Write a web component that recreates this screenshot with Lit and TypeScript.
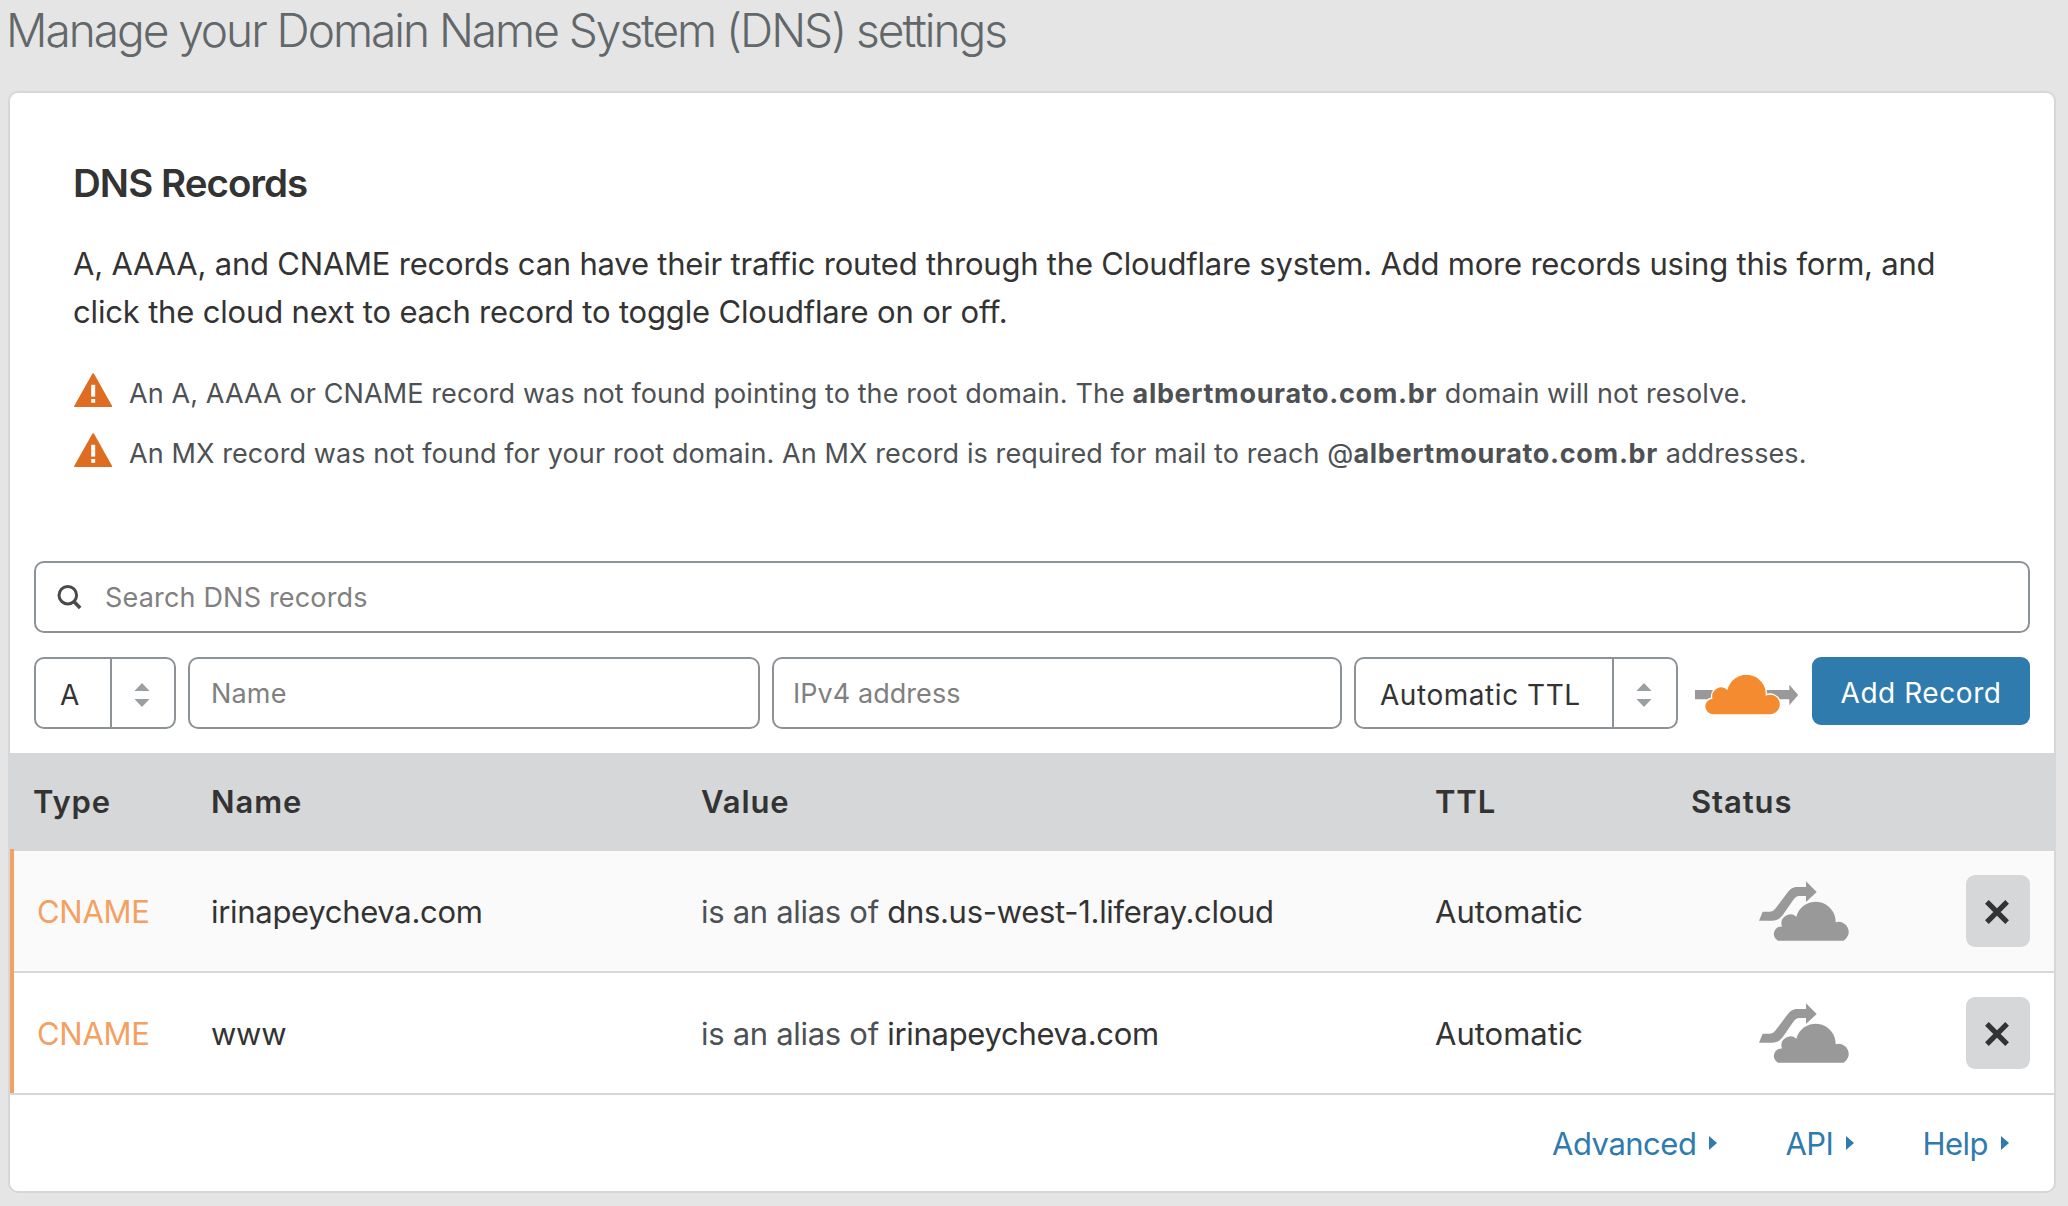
import { LitElement, html, css } from "lit";
import { customElement } from "lit/decorators.js";

interface DnsRecord {
  type: string;
  name: string;
  target: string;
  ttl: string;
}

const records: DnsRecord[] = [
  { type: "CNAME", name: "irinapeycheva.com", target: "dns.us-west-1.liferay.cloud", ttl: "Automatic" },
  { type: "CNAME", name: "www", target: "irinapeycheva.com", ttl: "Automatic" },
];

const links = ["Advanced", "API", "Help"];

const warningIcon = html`<svg class="warning-icon" viewBox="0 0 38.4 34.4" width="38.4" height="34.4">
  <path d="M18.5 .6Q19.2 -.3 19.9 .6L38.2 33Q38.5 34.3 37.4 34.4H1Q-.1 34.3 .2 33Z" fill="#de6c21" />
  <rect x="17.2" y="11.8" width="4" height="11.8" fill="#fff" />
  <rect x="17.2" y="26" width="4" height="3.8" fill="#fff" />
</svg>`;

const searchIcon = html`<svg class="search-icon" viewBox="0 0 26 26" width="26" height="26">
  <circle cx="10.8" cy="11.2" r="8.8" fill="none" stroke="#4a4a4a" stroke-width="3" />
  <path d="M16.6 17.2L23.2 24" stroke="#4a4a4a" stroke-width="3.6" />
</svg>`;

const steppers = html`<svg viewBox="0 0 16 24" width="16" height="24">
  <path d="M8 0L15.6 8H.4ZM8 24L15.6 16H.4Z" fill="#9a9fa1" />
</svg>`;

const proxiedCloud = "M98 177.5A23.3 23.3 0 0 1 97.5 131A27 27 0 0 1 142.5 105A58 58 0 0 1 257 122A29.3 29.3 0 1 1 269 177.5Z";

const proxiedIcon = html`<svg viewBox="45 60 310 120" width="103.3" height="40">
  <path d="M45 105H328V89L355 120L328 151V133H45Z" fill="#999" />
  <path d=${proxiedCloud} fill="#fff" stroke="#fff" stroke-width="8" />
  <path d=${proxiedCloud} fill="#f48b30" />
</svg>`;

const bypassIcon = html`<svg viewBox="57 34 270 180" width="90" height="60">
  <path
    fill="#999"
    d="M57 153L68 126H90C98 126 102 122 107 116L142 69C152 56 160 52 173 52H198V35L230 67L198 97V79H178C169 79 165 84 159 92L130 134C119 149 110 153 96 153ZM114 213A22.5 22.5 0 0 1 126 170.5A27 27 0 0 1 169 141A60 60 0 0 1 287 158A30.2 30.2 0 0 1 311 213Z"
  />
</svg>`;

const crossIcon = html`<svg viewBox="0 0 24 24" width="24" height="24">
  <path d="M1.9 1.9L22.1 22.1M22.1 1.9L1.9 22.1" stroke="#333" stroke-width="5.2" />
</svg>`;

const linkArrow = html`<svg viewBox="0 0 8 14" width="8" height="14"><path d="M0 0L8 7L0 14Z" fill="#2f7bae" /></svg>`;

@customElement("app-root")
export class AppRoot extends LitElement {
  static styles = css`
    :host {
      display: block;
      box-sizing: border-box;
      min-height: 1206px;
      padding: 0 12px 13px 8px;
      background: #e5e5e5;
      color: #333;
      font-family: Inter, "Liberation Sans", sans-serif;
      font-size: 31px;
    }
    * { box-sizing: border-box; }
    svg { display: block; flex: none; }
    .title {
      margin: 0 0 31px -2px;
      font-size: 46px;
      line-height: 60px;
      font-weight: 300;
      letter-spacing: -2.02px;
      color: #62676a;
      white-space: nowrap;
    }
    .card {
      height: 1102px;
      border: 2px solid #d5d7d8;
      border-radius: 10px;
      background: #fff;
      overflow: hidden;
    }
    .intro { padding: 66px 63px 0; }
    .intro h2 {
      margin: 0 0 33px;
      font-size: 38.5px;
      line-height: 48px;
      font-weight: 600;
      letter-spacing: -0.95px;
    }
    .intro p {
      margin: 0 0 27px;
      line-height: 48px;
      letter-spacing: -0.21px;
      white-space: nowrap;
    }
    .intro p .second { letter-spacing: -0.17px; }
    .warning {
      display: flex;
      align-items: center;
      height: 60px;
      padding-left: 1px;
      font-size: 27px;
      letter-spacing: 0.1px;
      color: #4d5154;
      white-space: nowrap;
    }
    .warning-icon { margin: -6px 16.6px 0 0; }
    .warning b { font-weight: 700; letter-spacing: 0.67px; }
    .form { padding: 78px 24px 24px; }
    .field {
      display: flex;
      align-items: center;
      height: 72px;
      padding-left: 21px;
      border: 2px solid #8d9296;
      border-radius: 10px;
      font-size: 27px;
      letter-spacing: 0.18px;
      color: #808080;
    }
    .field.address { padding-left: 19px; letter-spacing: 0.05px; }
    .search { margin-bottom: 24px; }
    .search-icon { margin: 0 22px 0 0; }
    .entry {
      display: grid;
      grid-template-columns: 142px 572px 570px 324px 1fr 218px;
      column-gap: 12px;
    }
    .select {
      display: grid;
      grid-template-columns: 1fr 64px;
      height: 72px;
      border: 2px solid #8d9296;
      border-radius: 10px;
      font-size: 28px;
      letter-spacing: 0.55px;
    }
    .select .value { padding: 4px 0 0 24px; line-height: 64px; white-space: nowrap; }
    .select .steps {
      display: flex;
      align-items: center;
      padding: 3px 0 0 22px;
      border-left: 2px solid #8d9296;
    }
    .toggle { display: flex; padding: 18px 0 0 5px; width: 110px; }
    .add {
      height: 68px;
      border-radius: 9px;
      background: #2f7bae;
      color: #fff;
      font-size: 28px;
      line-height: 72px;
      letter-spacing: 0.55px;
      text-align: center;
    }
    .head,
    .row {
      display: grid;
      align-items: center;
      white-space: nowrap;
    }
    .head {
      grid-template-columns: 178px 490px 734px 256px 1fr;
      height: 96px;
      padding-left: 23px;
      background: #d5d7d8;
      font-weight: 600;
      letter-spacing: 0.9px;
    }
    .body { border-left: 4px solid #f4a062; }
    .row {
      grid-template-columns: 173px 490px 734px 254px 277px 64px;
      height: 120px;
      padding-left: 24px;
      letter-spacing: -0.3px;
    }
    .row:first-child {
      height: 124px;
      border: solid #d5d7d8;
      border-width: 2px 0;
      background: #fafafa;
    }
    .type { color: #f4a062; letter-spacing: -0.3px; margin-left: -1px; }
    .alias { color: #4d5154; }
    .ttl { letter-spacing: 0; }
    .status { padding-left: 70px; }
    .remove {
      display: grid;
      place-items: center;
      width: 64px;
      height: 72px;
      padding: 2px 2px 0 0;
      border-radius: 9px;
      background: #d5d7d8;
    }
    .links {
      display: flex;
      justify-content: flex-end;
      align-items: center;
      gap: 68px;
      height: 98px;
      padding-right: 45px;
      border-top: 2px solid #d5d7d8;
      color: #2f7bae;
      letter-spacing: -0.5px;
    }
    .link { display: flex; align-items: center; gap: 13px; }
  `;

  private renderRecord(r: DnsRecord) {
    return html`<div class="row">
      <div class="type">${r.type}</div>
      <div>${r.name}</div>
      <div><span class="alias">is an alias of</span> ${r.target}</div>
      <div class="ttl">${r.ttl}</div>
      <div class="status">${bypassIcon}</div>
      <div class="remove">${crossIcon}</div>
    </div>`;
  }

  render() {
    return html`
      <div class="title">Manage your Domain Name System (DNS) settings</div>
      <section class="card">
        <div class="intro">
          <h2>DNS Records</h2>
          <p>A, AAAA, and CNAME records can have their traffic routed through the Cloudflare system. Add more records using this form, and<br /><span class="second">click the cloud next to each record to toggle Cloudflare on or off.</span></p>
          <div class="warning">
            ${warningIcon}<span>An A, AAAA or CNAME record was not found pointing to the root domain. The <b>albertmourato.com.br</b> domain will not resolve.</span>
          </div>
          <div class="warning">
            ${warningIcon}<span>An MX record was not found for your root domain. An MX record is required for mail to reach @<b>albertmourato.com.br</b> addresses.</span>
          </div>
        </div>
        <div class="form">
          <div class="field search">${searchIcon}<span>Search DNS records</span></div>
          <div class="entry">
            <div class="select"><span class="value">A</span><span class="steps">${steppers}</span></div>
            <div class="field">Name</div>
            <div class="field address">IPv4 address</div>
            <div class="select"><span class="value">Automatic TTL</span><span class="steps">${steppers}</span></div>
            <div class="toggle">${proxiedIcon}</div>
            <div class="add">Add Record</div>
          </div>
        </div>
        <div class="head">
          <div>Type</div><div>Name</div><div>Value</div><div>TTL</div><div>Status</div>
        </div>
        <div class="body">${records.map((r) => this.renderRecord(r))}</div>
        <div class="links">
          ${links.map((l) => html`<div class="link"><span>${l}</span>${linkArrow}</div>`)}
        </div>
      </section>
    `;
  }
}
